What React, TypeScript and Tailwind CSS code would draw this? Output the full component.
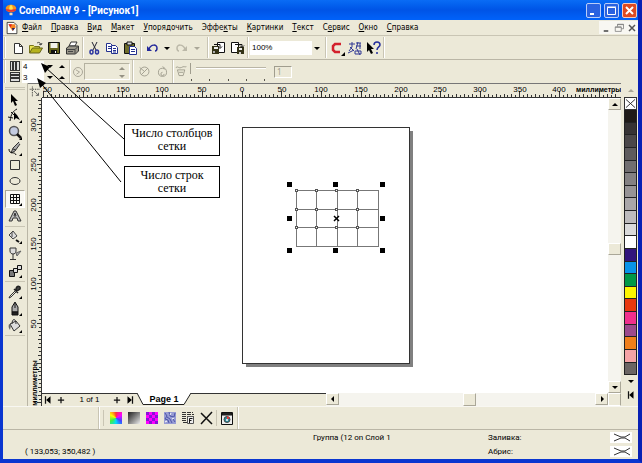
import React from 'react';

const menuItems = [
  ['', 'Ф', 'айл'],
  ['', 'П', 'равка'],
  ['', 'В', 'ид'],
  ['', 'М', 'акет'],
  ['', 'У', 'порядочить'],
  ['Эффе', 'к', 'ты'],
  ['', 'К', 'артинки'],
  ['', 'Т', 'екст'],
  ['С', 'е', 'рвис'],
  ['', 'О', 'кно'],
  ['', 'С', 'правка'],
];

const swatches = [
  '#1f1a17', '#373334', '#4b4748', '#5e5b5c', '#716e6f', '#848182', '#979495', '#aaa7a8', '#bdbbbc', '#dadada', '#ffffff',
  '#32157c', '#0893e8', '#009846', '#fff500', '#e8380d', '#f0308c', '#9c4a8c', '#ef7f1a', '#f5a3a5', '#6b6563',
];

type IconProps = { children: React.ReactNode; className?: string };

const Icon: React.FC<IconProps> = ({ children, className = 'h-4 w-4' }) => (
  <svg viewBox="0 0 16 16" className={`${className} shrink-0`} fill="none" stroke="#111" strokeWidth="1" aria-hidden="true">
    {children}
  </svg>
);

type ToolProps = { label: string; className?: string; disabled?: boolean; children: React.ReactNode };

const Tool: React.FC<ToolProps> = ({ label, className = 'w-[18px]', disabled, children }) => (
  <button type="button" aria-label={label} disabled={disabled} className={`flex shrink-0 items-center justify-center ${className}`}>
    {children}
  </button>
);

const Separator: React.FC = () => (
  <span className="mx-px h-full w-[2px] shrink-0 border-l border-[#c9c5b4] border-r border-r-white" />
);

const Flyout = () => <path d="M15 12v3h-3z" fill="#000" stroke="none" />;

const Arrow: React.FC<{ dir: 'up' | 'down' | 'left' | 'right'; color?: string }> = ({ dir, color = '#000' }) => {
  const paths = { up: 'M1 6h6L4 3z', down: 'M1 3h6L4 6z', left: 'M5 1v6L2 4z', right: 'M3 1v6l3-3z' };
  return (
    <svg viewBox="0 0 8 8" className="h-2 w-2 shrink-0" aria-hidden="true">
      <path d={paths[dir]} fill={color} />
    </svg>
  );
};

const TitleBar: React.FC = () => (
  <header className="flex h-5 items-center bg-linear-to-b from-[#0a6cf5] via-[#0054e6] to-[#0062fa] pr-px pl-[2px]">
    <Icon className="h-3 w-3">
      <path d="M8 1C3 1 1 4 1 6c0 3 3 4 5 5h4c2-1 5-2 5-5 0-2-2-5-7-5z" fill="#f7941d" stroke="none" />
      <path d="M8 1C5 3 5 8 7 11h2c2-3 2-8-1-10z" fill="#ffe34d" stroke="none" />
      <path d="M1 6c2 2 12 2 14 0l-1 3c-3 2-9 2-12 0z" fill="#e53935" stroke="none" />
      <path d="M6 12h4v3H6z" fill="#f6d9b0" stroke="none" />
    </Icon>
    <h1 className="ml-[2px] flex-1 font-['Roboto',sans-serif] text-[10px] font-bold whitespace-nowrap text-white">
      CorelDRAW 9 - [Рисунок1]
    </h1>
    <div className="flex gap-[3px]">
      <button type="button" aria-label="Свернуть" className="h-[15px] w-[15px] rounded-[2px] border border-[#b9cdf8] bg-[#2a62e0]">
        <svg viewBox="0 0 13 13" aria-hidden="true"><path d="M3 9h4v2H3z" fill="#fff" /></svg>
      </button>
      <button type="button" aria-label="Развернуть" className="h-[15px] w-[15px] rounded-[2px] border border-[#b9cdf8] bg-[#2a62e0]">
        <svg viewBox="0 0 13 13" aria-hidden="true"><path d="M2.5 3.5h8v7h-8zM2 3h9" fill="none" stroke="#fff" /></svg>
      </button>
      <button type="button" aria-label="Закрыть" className="h-[15px] w-[15px] rounded-[2px] border border-[#f5c9bd] bg-[#dd4a22]">
        <svg viewBox="0 0 13 13" aria-hidden="true"><path d="M3 3l7 7M10 3l-7 7" stroke="#fff" strokeWidth="2" /></svg>
      </button>
    </div>
  </header>
);

const MenuBar: React.FC = () => (
  <nav className="flex h-4 items-center border-b border-[#c9c5b4] pl-[3px] font-['DejaVu_Sans_Condensed','DejaVu_Sans',sans-serif] text-[8px] leading-[14px]">
    <Icon className="mr-[4px] h-[14px] w-3">
      <path d="M1.500 .5h9l4 4v11h-13z" fill="#fff" />
      <path d="M4 3h8l1 4-4 5-4-5z" fill="#f58220" stroke="none" />
      <path d="M3 3h5l-2 4z" fill="#d22" stroke="none" />
      <path d="M8 8l4 0-3 4z" fill="#226" stroke="none" />
    </Icon>
    <div className="flex flex-1 gap-[9px]">
      {menuItems.map(([before, key, after]) => (
        <button type="button" key={before + key + after} className="whitespace-nowrap">
          {before}<u>{key}</u>{after}
        </button>
      ))}
    </div>
    <div className="flex bg-[#f8f7f2]">
      <Tool label="Свернуть документ" className="h-[13px] w-[13px]"><Icon className="h-3 w-3"><path d="M5 12h6" strokeWidth="2" stroke="#444" /></Icon></Tool>
      <Tool label="Восстановить документ" className="h-[13px] w-[13px]"><Icon className="h-3 w-3"><path d="M6 6V3h8v6h-3M3 6.500h8v6H3zM3 7h8M6 3.500h8" stroke="#777" /></Icon></Tool>
      <Tool label="Закрыть документ" className="h-[13px] w-[13px]"><Icon className="h-3 w-3"><path d="M4 4l8 8M12 4l-8 8" strokeWidth="2" stroke="#555" /></Icon></Tool>
    </div>
  </nav>
);

const StandardBar: React.FC = () => (
  <div className="flex h-6 items-stretch border-b border-[#bab6a6] py-px">
    <Separator />
    <Tool label="Создать" className="ml-[2px] w-[18px]">
      <Icon><path d="M4.500 3.500h5l3 3v7h-8zM9.500 3.500v3h3" fill="#fff" stroke="#333" /></Icon>
    </Tool>
    <Tool label="Открыть">
      <Icon>
        <path d="M1.500 13V5.500h4l1 1h5V8" fill="#e9e452" stroke="#77751a" />
        <path d="M1.500 13l3-5h10l-3 5z" fill="#b5b21e" stroke="#66641a" />
        <path d="M9 3c2-1 3-1 4 2m1-2l-1 2-2-1" stroke="#444" />
      </Icon>
    </Tool>
    <Tool label="Сохранить">
      <Icon>
        <path d="M2.500 2.500h11v11h-10l-1-1z" fill="#67651c" />
        <path d="M4.500 3h7v5h-7z" fill="#f4f3ea" stroke="none" />
        <path d="M5 10h6v3H5z" fill="#111" stroke="none" /><path d="M9 11h1v2H9z" fill="#fff" stroke="none" />
      </Icon>
    </Tool>
    <Tool label="Печать">
      <Icon>
        <path d="M5 6l2-4h6l-2 4z" fill="#fff" stroke="#333" />
        <path d="M2.500 8l3-2h9v5l-3 3h-9z" fill="#99968a" stroke="#333" />
        <path d="M3 9.500h8v4M11 9.500l3-3M4 11.500h5" stroke="#444" />
      </Icon>
    </Tool>
    <Separator />
    <Tool label="Вырезать">
      <Icon>
        <path d="M6 2l4 8M11 2L7 10" stroke="#223" />
        <ellipse cx="5.500" cy="12" rx="1.500" ry="2" stroke="#2b35a0" strokeWidth="1.500" />
        <ellipse cx="11" cy="12" rx="1.500" ry="2" stroke="#2b35a0" strokeWidth="1.500" />
      </Icon>
    </Tool>
    <Tool label="Копировать">
      <Icon>
        <path d="M2.500 3.500h4l2 2v6h-6z" fill="#fff" stroke="#23308f" /><path d="M4 6.500h3M4 8.500h3" stroke="#23308f" />
        <path d="M7.500 5.500h4l2 2v6h-6z" fill="#fff" stroke="#23308f" /><path d="M9 8.500h3M9 10.500h3M9 12h3" stroke="#23308f" />
      </Icon>
    </Tool>
    <Tool label="Вставить">
      <Icon>
        <path d="M2.500 3.500h10v10h-10z" fill="#6e6c2a" /><path d="M5 2h5v3H5z" fill="#ddd" />
        <path d="M7.500 6.500h5l2 2v6h-7z" fill="#fff" stroke="#23308f" /><path d="M9 9.500h4M9 11.500h4" stroke="#23308f" />
      </Icon>
    </Tool>
    <Separator />
    <Tool label="Отменить">
      <Icon><path d="M5 9C7 4 13 4 13 8c0 2-1 3-2 3" stroke="#23289a" strokeWidth="1.500" /><path d="M3 6v5h5z" fill="#23289a" stroke="none" /></Icon>
    </Tool>
    <Tool label="Список отмены" className="w-3"><Arrow dir="down" /></Tool>
    <Tool label="Вернуть" disabled>
      <Icon><path d="M11 9C9 4 3 4 3 8c0 2 1 3 2 3" stroke="#bbb8a8" strokeWidth="1.500" /><path d="M13 6v5H8z" fill="#bbb8a8" stroke="none" /></Icon>
    </Tool>
    <Tool label="Список возврата" className="mr-[3px] w-3" disabled><Arrow dir="down" color="#aaa798" /></Tool>
    <Separator />
    <Tool label="Импорт">
      <Icon>
        <path d="M6.500 2.500h7v10h-7z" fill="#fff" /><path d="M1 6h7v8H1z" fill="#333215" stroke="none" />
        <path d="M3 7h4v2H3z" fill="#eee" stroke="none" /><path d="M3 4.500h6v3M7 6.500l2 2 2-2" /><path d="M2 11h2v2H2z" fill="#aaa" stroke="none" />
      </Icon>
    </Tool>
    <Tool label="Экспорт">
      <Icon>
        <path d="M2.500 2.500h7v10h-7z" fill="#fff" /><path d="M8 7h7v7H8z" fill="#333215" stroke="none" />
        <path d="M10 8h3v2h-3z" fill="#eee" stroke="none" /><path d="M6 4.500h7v3M11 5.500l2 2 2-2" /><path d="M10 12h2v2h-2z" fill="#ccc" stroke="none" />
      </Icon>
    </Tool>
    <Separator />
    <div className="relative w-[74px] self-center">
      <select aria-label="Масштаб" defaultValue="100%" className="block h-[14px] w-[62px] appearance-none bg-white pl-[2px] font-['Liberation_Sans',sans-serif] text-[8px] leading-[14px]">
        <option>100%</option>
        <option>200%</option>
      </select>
      <span className="pointer-events-none absolute top-[3px] right-[3px]"><Arrow dir="down" /></span>
    </div>
    <Separator />
    <Tool label="Запуск приложений">
      <Icon><path d="M12 4H6L4 6v4l2 2h5" stroke="#d3212d" strokeWidth="2.500" /><path d="M16 12v4h-4z" fill="#000" stroke="none" /></Icon>
    </Tool>
    <Tool label="Сообщество">
      <Icon>
        <path d="M2 4h6M5 2v5l-3 4M3 7l4 4M9 3h5M9 6h5M11 2l-2 7M13 3v6M1 13l6-3M8 11h6v3H8zM10 9l3 6" stroke="#303894" />
      </Icon>
    </Tool>
    <Tool label="Что это">
      <Icon>
        <path d="M2 2v10l2-2 2 4 2-1-2-4h3z" fill="#000" stroke="none" />
        <path d="M9 5c0-4 6-4 6 0 0 2-3 2-3 5M12 12v2" stroke="#252f9c" strokeWidth="1.500" />
      </Icon>
    </Tool>
    <Separator />
  </div>
);

const Spinner: React.FC<{ id: string; label: string; value: string; children: React.ReactNode }> = ({ id, label, value, children }) => (
  <div className="flex h-[11px] items-center">
    <label htmlFor={id} aria-label={label} className="mr-[2px]">
      <svg viewBox="0 0 10 10" className="h-[10px] w-[10px]" shapeRendering="crispEdges" aria-hidden="true">{children}</svg>
    </label>
    <input id={id} defaultValue={value} className="h-[11px] w-[22px] bg-white pl-px font-['Liberation_Sans',sans-serif] text-[8px] leading-[11px]" />
    <button type="button" aria-label={`${label}: меньше`} className="flex h-[11px] w-[11px] items-center justify-center"><Arrow dir="down" /></button>
    <button type="button" aria-label={`${label}: больше`} className="flex h-[11px] w-[13px] items-center justify-center"><Arrow dir="up" /></button>
  </div>
);

const PropertyBar: React.FC = () => (
  <div className="flex h-[23px] items-center">
    <Separator />
    <div className="ml-[3px]">
      <Spinner id="columns" label="Столбцы" value="4">
        <path d="M0 0h10v10H0z" fill="#333" /><path d="M1 1h1v8H1zM4 1h1v8H4zM7 1h2v8H7z" fill="#ddd" />
      </Spinner>
      <Spinner id="rows" label="Строки" value="3">
        <path d="M0 0h10v10H0z" fill="#333" /><path d="M1 1h8v1H1zM1 4h8v1H1zM1 7h8v2H1z" fill="#ddd" />
      </Spinner>
    </div>
    <Separator />
    <Tool label="Угол" className="w-3" disabled>
      <Icon className="h-3 w-3"><circle cx="8" cy="8" r="6" stroke="#959284" /><path d="M5 5l5 3-4 3" stroke="#959284" /></Icon>
    </Tool>
    <div className="mr-px flex h-[17px] w-[46px] items-center justify-end border border-[#b4b1a0] border-r-white border-b-white pr-[3px]">
      <div className="flex flex-col">
        <Arrow dir="up" color="#959284" /><Arrow dir="down" color="#959284" />
      </div>
    </div>
    <Separator />
    <Tool label="Дуга" disabled>
      <Icon className="h-[13px] w-[13px]"><circle cx="8" cy="8" r="5.500" stroke="#959284" /><path d="M2 3l6 5 4-4M8 8l-4 4" stroke="#959284" /></Icon>
    </Tool>
    <Tool label="Направление" disabled>
      <Icon className="h-[13px] w-[13px]"><path d="M8 4a5 5 0 1 0 5 5c0-4-2-5-5-7M8 4l3 1M8 9a2 2 0 1 0 2 2" stroke="#959284" /></Icon>
    </Tool>
    <Separator />
    <Tool label="Спираль" className="w-[13px]" disabled>
      <Icon className="h-[13px] w-[13px]"><path d="M1 3c3-2 4 2 7 0s4 0 6-1M3 6h9l-2 7H5zM5 9h5" stroke="#959284" /></Icon>
    </Tool>
    <div className="relative ml-[2px] h-[18px] w-[76px]">
      <input
        type="range"
        aria-label="Расширение спирали"
        disabled
        defaultValue={0}
        className="absolute inset-x-0 top-[4px] h-[2px] w-full appearance-none border-t border-[#bab6a6] bg-white [&::-webkit-slider-thumb]:h-[11px] [&::-webkit-slider-thumb]:w-[6px] [&::-webkit-slider-thumb]:appearance-none [&::-webkit-slider-thumb]:border-l [&::-webkit-slider-thumb]:border-[#a09d8e] [&::-webkit-slider-thumb]:bg-[#ece9d8]"
      />
      <div className="absolute inset-x-0 bottom-0 flex justify-between px-px">
        {[0, 1, 2, 3, 4].map((n) => <span key={n} className="h-[2px] w-px bg-[#55534a]" />)}
      </div>
    </div>
    <input aria-label="Шаг спирали" disabled defaultValue="1" className="ml-2 h-3 w-[18px] border border-[#a09d8e] border-r-white border-b-white pl-[2px] text-[8px] leading-[10px] text-[#a09d8e]" />
  </div>
);

const Toolbox: React.FC = () => (
  <aside className="flex w-[25px] shrink-0 flex-col border-r border-[#bab6a6] px-[2px]">
    <div className="mt-[4px] mb-[2px] h-[3px] border-y border-[#c9c5b4]" />
    <div className="flex h-[132px] flex-col">
      <Tool label="Указатель" className="flex-1"><Icon><path d="M4 2v9l2-2 2 5 2-1-2-4h3z" fill="#000" stroke="none" /></Icon></Tool>
      <Tool label="Форма" className="flex-1">
        <Icon><path d="M10 1C6 3 4 6 3 13M4 4l3 3M1 9l5 1" /><path d="M7 4v8l2-2 4 2-3-5z" fill="#000" stroke="none" /><Flyout /></Icon>
      </Tool>
      <Tool label="Масштаб" className="flex-1">
        <Icon><circle cx="7" cy="6" r="4.500" fill="#c3cbe0" stroke="#555" strokeWidth="1.500" /><path d="M10 9l4 4" strokeWidth="2.500" /><Flyout /></Icon>
      </Tool>
      <Tool label="Кривая" className="flex-1">
        <Icon><path d="M12 1L6 7l-2 5 4-2 5-7M6 8l3 1" fill="#aaa" stroke="#333" /><path d="M2 8c0 6 6 2 7 6" /><Flyout /></Icon>
      </Tool>
      <Tool label="Прямоугольник" className="flex-1"><Icon><path d="M3.500 3.500h9v9h-9z" stroke="#333" /></Icon></Tool>
      <Tool label="Эллипс" className="flex-1"><Icon><ellipse cx="8" cy="8" rx="5" ry="3.500" stroke="#333" /></Icon></Tool>
      <Tool label="Сетка" className="flex-1 border border-[#aaa798] border-r-white border-b-white bg-[#faf9f4]">
        <Icon><path d="M3.500 3.500h9v9h-9zM6.500 4v8M9.500 4v8M4 6.500h8M4 9.500h8" /><Flyout /></Icon>
      </Tool>
      <Tool label="Текст" className="flex-1">
        <Icon><path d="M2 13l5-10h2l5 10h-3l-1-3H6l-1 3zM7 8h2L8 5z" fill="#bbb" stroke="#333" /></Icon>
      </Tool>
    </div>
    <div className="my-[2px] h-px bg-[#c9c5b4]" />
    <div className="flex h-[50px] flex-col">
      <Tool label="Интерактивная заливка" className="flex-1">
        <Icon><path d="M2 6l4-4 4 5-4 3zM5 3v5" fill="#ddd" stroke="#444" /><path d="M9 11l3 2" strokeWidth="2" /><Flyout /></Icon>
      </Tool>
      <Tool label="Прозрачность" className="flex-1">
        <Icon><path d="M3 2h6v3c0 4-6 4-6 0zM6 8v5M3 13.500h6" fill="#ddd" stroke="#333" /><path d="M9 7l5-2-4 5z" fill="#aaa" stroke="#666" /></Icon>
      </Tool>
      <Tool label="Перетекание" className="flex-1">
        <Icon><path d="M2.500 7.500h5v6h-5z" fill="#777" /><path d="M6.500 5.500h4v4h-4zM10.500 2.500h4v4h-4z" fill="#ddd" /><Flyout /></Icon>
      </Tool>
    </div>
    <div className="my-[2px] h-px bg-[#c9c5b4]" />
    <div className="flex h-[50px] flex-col">
      <Tool label="Пипетка" className="flex-1">
        <Icon><path d="M8 7l-5 5-1 2 2-1 5-5" stroke="#333" /><path d="M7 5l4 4M9 5c1-4 5-3 4 0l-3 2z" fill="#444" stroke="#222" strokeWidth="1.500" /><Flyout /></Icon>
      </Tool>
      <Tool label="Абрис" className="flex-1">
        <Icon><path d="M8 1L5 6v5h6V6zM8 2v5" fill="#aaa" /><path d="M5 11h6v3H5z" fill="#222" /><Flyout /></Icon>
      </Tool>
      <Tool label="Заливка" className="flex-1">
        <Icon><path d="M3 6l6-3 4 5-6 5zM5 6c0-6 4-6 4 0" fill="#ddd" stroke="#333" /><path d="M2 6c-1 3 0 4 1 6L4 7z" fill="#666" stroke="none" /><Flyout /></Icon>
      </Tool>
    </div>
    <div className="mt-px h-px bg-[#c9c5b4]" />
  </aside>
);

const topMarks = [200, 150, 100, 50, 0, 50, 100, 150, 200, 250, 300, 350, 400];
const sideMarks = [300, 250, 200, 150, 100, 50];

const TopRuler: React.FC = () => (
  <svg className="block h-[14px] w-full font-['Liberation_Sans',sans-serif]" fontSize="8" textAnchor="middle">
    <g stroke="#333" shapeRendering="crispEdges">
      <path d="M0 13.500H600" />
      {Array.from({ length: 145 }, (_, i) => (
        <path key={i} d={`M${Math.round(1 + i * 3.97)}.5 ${i % 10 === 0 ? 7 : i % 2 === 0 ? 10 : 11}V13`} />
      ))}
    </g>
    <text x="1" y="8" textAnchor="start">50</text>
    {topMarks.map((mark, i) => (
      <text key={i} x={Math.round(41 + i * 39.7)} y="8">{mark}</text>
    ))}
    <text x="534" y="8" textAnchor="start" fontWeight="bold" fontSize="7">миллиметры</text>
  </svg>
);

const SideRuler: React.FC = () => (
  <svg className="block h-full w-[14px] font-['Liberation_Sans',sans-serif]" fontSize="8" textAnchor="middle">
    <g stroke="#333" shapeRendering="crispEdges">
      <path d="M13.500 0V320" />
      {Array.from({ length: 77 }, (_, i) => (
        <path key={i} d={`M${(i + 4) % 10 === 0 ? 9 : i % 2 === 0 ? 10 : 11} ${Math.round(2 + i * 3.98)}.5H13`} />
      ))}
    </g>
    {sideMarks.map((mark, i) => (
      <text key={mark} transform={`translate(8 ${Math.round(27 + i * 39.8)}) rotate(-90)`}>{mark}</text>
    ))}
    <text transform="translate(9 285) rotate(-90)" fontWeight="bold" fontSize="7">миллиметры</text>
  </svg>
);

const Drawing: React.FC = () => (
  <svg className="block h-full w-full bg-white" shapeRendering="crispEdges" role="img" aria-label="Страница с сеткой">
    <path d="M204 33H371V269H204z" fill="#808080" />
    <path d="M200.500 29.500H367.500V265.500H200.500z" fill="#fff" stroke="#333" />
    <path
      d="M254.500 92.500H336.500V148.500H254.500zM274.500 92V148M295.500 92V148M315.500 92V148M254 111.500H336M254 129.500H336"
      fill="none"
      stroke="#777"
    />
    {[254, 274, 294, 315].map((x) =>
      [92, 111, 129].map((y) => <rect key={`${x}-${y}`} x={x - 1} y={y - 1} width="3" height="3" fill="#555" />)
    )}
    {[254, 274, 294, 315].map((x) =>
      [92, 111, 129].map((y) => <rect key={`${x}-${y}`} x={x} y={y} width="1" height="1" fill="#fff" />)
    )}
    {[[246, 85], [292, 85], [339, 85], [246, 119], [339, 119], [246, 151], [292, 151], [339, 151]].map(([x, y]) => (
      <rect key={`${x}-${y}`} x={x - 1} y={y - 1} width="5" height="5" fill="#000" />
    ))}
    <path d="M292 118l5 5M297 118l-5 5" stroke="#000" strokeWidth="1.500" shapeRendering="auto" />
  </svg>
);

const ScrollButton: React.FC<{ dir: 'up' | 'down' | 'left' | 'right' }> = ({ dir }) => (
  <button type="button" aria-label={`Прокрутка ${dir}`} className="flex h-3 w-[13px] shrink-0 items-center justify-center border border-white border-r-[#aaa798] border-b-[#aaa798] bg-[#ece9d8]">
    <Arrow dir={dir} />
  </button>
);

const PageBar: React.FC = () => (
  <div className="flex h-[13px] items-stretch">
    <div className="flex w-[95px] shrink-0 items-center border-t border-[#333] font-['Liberation_Sans',sans-serif] text-[8px] leading-[12px]">
      <Tool label="Первая страница" className="w-3"><Icon className="h-[10px] w-[10px]"><path d="M4 2v12" strokeWidth="2" /><path d="M12 2v12L5 8z" fill="#000" stroke="none" /></Icon></Tool>
      <Tool label="Добавить страницу в начало" className="w-[14px]"><Icon className="h-[10px] w-[10px]"><path d="M8 3v10M3 8h10" strokeWidth="2" /></Icon></Tool>
      <span className="flex-1 text-center">1 of 1</span>
      <Tool label="Добавить страницу в конец" className="w-3"><Icon className="h-[10px] w-[10px]"><path d="M8 3v10M3 8h10" strokeWidth="2" /></Icon></Tool>
      <Tool label="Последняя страница" className="w-[14px]"><Icon className="h-[10px] w-[10px]"><path d="M12 2v12" strokeWidth="2" /><path d="M4 2v12l7-6z" fill="#000" stroke="none" /></Icon></Tool>
    </div>
    <button type="button" className="relative w-[54px] shrink-0 font-['Liberation_Sans',sans-serif] text-[9px] leading-[11px] font-bold">
      <svg viewBox="0 0 54 13" className="absolute inset-0 h-full w-full" aria-hidden="true">
        <path d="M0 0L6 11.500H47L54 0" fill="#fff" stroke="#222" />
      </svg>
      <span className="relative">Page 1</span>
    </button>
    <div className="w-[135px] border-t border-[#333]" />
    <div className="flex min-w-0 flex-1 bg-[#f5f4ee]">
      <ScrollButton dir="left" />
      <div className="flex flex-1 justify-center pl-[4px]">
        <div className="h-full w-[13px] border border-white border-r-[#aaa798] border-b-[#aaa798] bg-[#ece9d8]" />
      </div>
      <ScrollButton dir="right" />
    </div>
  </div>
);

const Palette: React.FC = () => (
  <aside className="mr-px ml-[3px] flex w-[13px] shrink-0 flex-col items-center">
    <button type="button" aria-label="Палитра вверх" className="flex h-[14px] items-center"><Arrow dir="up" color="#aaa798" /></button>
    <button type="button" aria-label="Без цвета" className="h-[13px] w-full border border-[#333] bg-white">
      <svg viewBox="0 0 12 11" className="h-full w-full" aria-hidden="true"><path d="M1 1l10 9M11 1L1 10" stroke="#222" /></svg>
    </button>
    <div className="flex h-[265px] w-full flex-col border-x border-[#222]">
      {swatches.map((color) => (
        <button type="button" key={color} aria-label={color} className="w-full flex-1 border-b border-[#222]" style={{ backgroundColor: color }} />
      ))}
    </div>
    <button type="button" aria-label="Палитра вниз" className="flex h-3 items-center"><Arrow dir="down" /></button>
    <button type="button" aria-label="Развернуть палитру" className="mt-[2px] flex h-3 items-center">
      <Icon className="h-[10px] w-[10px]"><path d="M4 2v12" strokeWidth="2" /><path d="M12 2v12L5 8z" fill="#000" stroke="none" /></Icon>
    </button>
  </aside>
);

const FillBar: React.FC = () => (
  <div className="flex h-6 items-center border-y border-t-[#f8f7f2] border-b-[#bab6a6] pl-[94px]">
    <Separator />
    <span className="mr-px ml-[2px] h-4 w-px bg-[#c9c5b4]" />
    <Tool label="Цвет заливки" className="ml-[2px] w-[18px]">
      <span className="h-3 w-3 bg-[conic-gradient(#f33,#f0f,#44f,#0df,#4e4,#ff0,#f33)]" />
    </Tool>
    <Tool label="Градиентная заливка"><span className="h-3 w-3 bg-linear-to-br from-[#222] to-[#eee]" /></Tool>
    <Tool label="Узорная заливка">
      <Icon><path d="M2 2h12v12H2z" fill="#f0f" stroke="none" /><path d="M2 2h3v3H2zM8 2h3v3H8zM5 5h3v3H5zM11 5h3v3h-3zM2 8h3v3H2zM8 8h3v3H8zM5 11h3v3H5zM11 11h3v3h-3z" fill="#8a10d8" stroke="none" /></Icon>
    </Tool>
    <Tool label="Текстурная заливка">
      <Icon><path d="M2 2h12v12H2z" fill="#969bd4" stroke="none" /><path d="M3 3l2 3-2 3 3 1 1 3M7 2l1 4 4 1 1-4M8 9l2 4M11 9l2 3M5 7l3 2" stroke="#4c54a8" /><path d="M9 3l-1 2M3 12l2-1M12 8l-2 1" stroke="#fff" /></Icon>
    </Tool>
    <Tool label="Заливка PostScript">
      <Icon><path d="M2 2.500h11M2 4.500h12M2 6.500h12M2 8.500h5M2 10.500h5M3 12.500h4" stroke="#333" strokeDasharray="4 1" /><path d="M7.500 6.500h6v7h-6z" fill="#eee" stroke="#555" /><path d="M9.500 13V8.500h3M9.500 10.500h2" /></Icon>
    </Tool>
    <Tool label="Без заливки"><Icon><path d="M3 3l11 11M14 2L3 14" strokeWidth="1.500" /></Icon></Tool>
    <span className="mx-px h-4 w-px bg-[#c9c5b4]" />
    <Tool label="Окно цвета">
      <Icon><path d="M2.500 2.500h11v12h-11z" fill="#eee" /><path d="M3 3h10v2H3z" fill="#333" /><circle cx="8" cy="9.500" r="3" fill="#2b8c9c" stroke="#444" /><path d="M8 9.500V6l3 2z" fill="#e33" stroke="none" /><circle cx="8" cy="10" r="1" fill="#fff" stroke="none" /></Icon>
    </Tool>
    <Separator />
  </div>
);

const NoneMark: React.FC = () => (
  <svg viewBox="0 0 22 11" className="h-[11px] w-[22px] bg-white" aria-hidden="true">
    <path d="M4 2l7 3h4l5-3M4 9l7-3h4l5 3" fill="none" stroke="#333" />
  </svg>
);

const StatusBar: React.FC = () => (
  <footer className="grid grow grid-cols-[310px_175px_1fr_auto] content-center gap-y-[2px] pr-[6px] font-['Roboto',sans-serif] text-[8px] leading-[12px]">
    <span />
    <span>Группа (12 on Слой 1</span>
    <span>Заливка:</span>
    <NoneMark />
    <span className="pl-[22px]">( 133,053; 350,482 )</span>
    <span />
    <span>Абрис:</span>
    <NoneMark />
  </footer>
);

const Callouts: React.FC = () => (
  <div className="pointer-events-none absolute inset-0">
    <svg className="absolute inset-0 h-full w-full" aria-hidden="true">
      <path d="M42 67L121 139M37 82L118 182" stroke="#000" />
      <path d="M38 63l9 4-5 6zM34 78l9 5-6 5z" fill="#000" />
    </svg>
    <div className="absolute top-[124px] left-[121px] flex w-[96px] flex-col gap-[10px] text-center font-['Liberation_Serif',serif] text-[12px] leading-[13px]">
      <p className="border border-black bg-white px-1 py-[2px]">Число столбцов сетки</p>
      <p className="border border-black bg-white px-1 py-[2px]">Число строк сетки</p>
    </div>
  </div>
);

const App: React.FC = () => (
  <div className="relative flex min-h-screen flex-col border-r-4 border-b-4 border-l-3 border-[#0a36d0] border-r-[#0820b4] bg-[#ece9d8] text-black">
    <TitleBar />
    <MenuBar />
    <StandardBar />
    <PropertyBar />
    <main className="flex h-[323px]">
      <Toolbox />
      <div className="flex w-[14px] shrink-0 flex-col border-t border-[#777]">
        <Icon className="h-[14px] w-[14px]"><path d="M5 3v11M2 6h11" strokeDasharray="1 1" /><path d="M7 8l5 5M12 10v3H9" stroke="#555" /></Icon>
        <div className="min-h-0 flex-1"><SideRuler /></div>
      </div>
      <div className="flex min-w-0 flex-1 flex-col border-t border-[#777]">
        <TopRuler />
        <div className="flex min-h-0 flex-1">
          <div className="min-w-0 flex-1 overflow-hidden"><Drawing /></div>
          <div className="flex w-[13px] flex-col bg-[#f5f4ee]">
            <ScrollButton dir="up" />
            <div className="flex flex-1 items-center pt-[6px]">
              <div className="h-3 w-full border border-white border-r-[#aaa798] border-b-[#aaa798] bg-[#ece9d8]" />
            </div>
            <ScrollButton dir="down" />
          </div>
        </div>
        <div className="flex">
          <div className="min-w-0 flex-1"><PageBar /></div>
          <div className="w-[13px] border border-white border-r-[#aaa798]" />
        </div>
      </div>
      <Palette />
    </main>
    <FillBar />
    <StatusBar />
    <Callouts />
  </div>
);

export default App;
